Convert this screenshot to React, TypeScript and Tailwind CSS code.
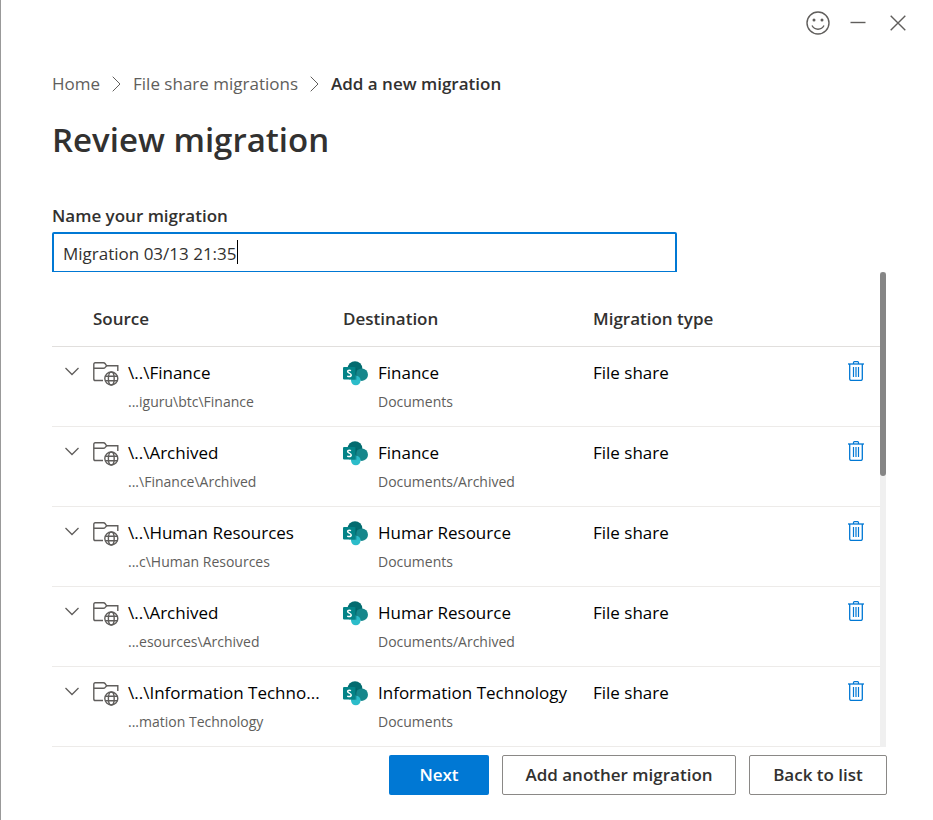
import { useState } from "react";

type Migration = {
  source: string;
  sourcePath: string;
  destination: string;
  destinationPath: string;
};

const migrations: Migration[] = [
  { source: "\\..\\Finance", sourcePath: "...iguru\\btc\\Finance", destination: "Finance", destinationPath: "Documents" },
  { source: "\\..\\Archived", sourcePath: "...\\Finance\\Archived", destination: "Finance", destinationPath: "Documents/Archived" },
  { source: "\\..\\Human Resources", sourcePath: "...c\\Human Resources", destination: "Humar Resource", destinationPath: "Documents" },
  { source: "\\..\\Archived", sourcePath: "...esources\\Archived", destination: "Humar Resource", destinationPath: "Documents/Archived" },
  { source: "\\..\\Information Techno...", sourcePath: "...mation Technology", destination: "Information Technology", destinationPath: "Documents" },
];

function SmileIcon() {
  return (
    <svg width="24" height="24" viewBox="0 0 24 24" fill="none" stroke="#605e5c" strokeWidth="1.4" aria-hidden="true">
      <circle cx="12" cy="12" r="11" />
      <path d="M6 14.5c1.2 2.3 3.3 3.7 6 3.7s4.8-1.4 6-3.7" />
      <circle cx="8" cy="9" r="1.5" fill="#605e5c" stroke="none" />
      <circle cx="16" cy="9" r="1.5" fill="#605e5c" stroke="none" />
    </svg>
  );
}

function MinimizeIcon() {
  return (
    <svg width="16" height="16" viewBox="0 0 16 16" aria-hidden="true">
      <path d="M0.5 7.5h15" stroke="#605e5c" strokeWidth="1.4" />
    </svg>
  );
}

function CloseIcon() {
  return (
    <svg width="16" height="16" viewBox="0 0 16 16" aria-hidden="true">
      <path d="M0.7 0.7l14.6 14.6M15.3 0.7L0.7 15.3" stroke="#605e5c" strokeWidth="1.4" />
    </svg>
  );
}

function ChevronRight() {
  return (
    <svg width="9" height="16" viewBox="0 0 9 16" fill="none" aria-hidden="true">
      <path d="M0.7 0.7L8 8L0.7 15.3" stroke="#605e5c" strokeWidth="1" />
    </svg>
  );
}

function ChevronDown() {
  return (
    <svg width="14" height="9" viewBox="0 0 14 9" fill="none" aria-hidden="true">
      <path d="M0.5 1L7 7.5L13.5 1" stroke="#605e5c" strokeWidth="1.3" />
    </svg>
  );
}

function NetworkFolderIcon() {
  return (
    <svg width="26" height="25" viewBox="0 -1 26 25" fill="none" stroke="#605e5c" strokeWidth="1.4" aria-hidden="true">
      <path d="M10 18.5H2.2Q0.8 18.5 0.8 17.1V2.2Q0.8 0.8 2.2 0.8H10.5Q11.5 0.8 12 1.5L13.7 3.8H24.8V9" />
      <path d="M0.8 6.3H10.5Q11.5 6.3 12 5.6L13.7 3.8" />
      <circle cx="18.3" cy="16.5" r="6.5" />
      <ellipse cx="18.3" cy="16.5" rx="2.9" ry="6.5" />
      <path d="M12.2 14.3H24.4M12.2 18.7H24.4" />
    </svg>
  );
}

function SharePointIcon() {
  return (
    <svg width="26" height="25" viewBox="0 0 26 25" aria-hidden="true">
      <circle cx="12" cy="7.5" r="7.3" fill="#036c70" />
      <circle cx="18.8" cy="13.7" r="6.2" fill="#16868b" />
      <circle cx="12.8" cy="19.5" r="4.8" fill="#2cbcc9" />
      <path d="M6 7.3h7.5v11.500H6z" fill="#02494c" opacity="0.35" />
      <rect x="0" y="6" width="12.5" height="12.5" rx="1.1" fill="#038387" />
      <path
        d="M8 9.7C7.4 9.4 6.9 9.3 6.300 9.3C5.2 9.3 4.6 9.8 4.6 10.500C4.6 12.3 8.2 11.9 8.2 14C8.2 15.1 7.4 15.600 6.1 15.600C5.4 15.600 4.8 15.4 4.2 15.1"
        fill="none"
        stroke="#fff"
        strokeWidth="1.5"
      />
    </svg>
  );
}

function TrashIcon() {
  return (
    <svg width="16" height="20" viewBox="0 0 16 20" fill="none" stroke="#0078d4" aria-hidden="true">
      <path d="M0 3H16" strokeWidth="1.3" />
      <path d="M5.5 3V1.5Q5.5 0.6 6.4 0.6H9.6Q10.5 0.6 10.5 1.5V3" strokeWidth="1.2" />
      <path d="M1.7 3V18Q1.7 19.4 3.1 19.4H12.9Q14.3 19.4 14.3 18V3" strokeWidth="1.3" />
      <path d="M5.500 6V16M8 6V16M10.500 6V16" strokeWidth="1.2" />
    </svg>
  );
}

function MigrationRow({ item }: { item: Migration }) {
  return (
    <tr className="h-20 border-b border-[#edebe9] align-top">
      <td className="pt-5 pl-[13px]">
        <button type="button" aria-label="Expand row" className="flex">
          <ChevronDown />
        </button>
      </td>
      <td className="pt-[14px]">
        <div className="flex items-start gap-[9px]">
          <NetworkFolderIcon />
          <div className="min-w-0">
            <div className="text-[17px] leading-6 whitespace-nowrap text-black">{item.source}</div>
            <div className="mt-[7px] text-sm leading-5 whitespace-nowrap text-[#605e5c]">{item.sourcePath}</div>
          </div>
        </div>
      </td>
      <td className="pt-[14px]">
        <div className="flex items-start gap-[9px]">
          <SharePointIcon />
          <div className="min-w-0">
            <div className="text-[17px] leading-6 whitespace-nowrap text-black">{item.destination}</div>
            <div className="mt-[7px] text-sm leading-5 whitespace-nowrap text-[#605e5c]">{item.destinationPath}</div>
          </div>
        </div>
      </td>
      <td className="pt-[14px] text-[17px] leading-6 text-black">File share</td>
      <td className="pt-[14px]">
        <button type="button" aria-label="Delete migration" className="flex">
          <TrashIcon />
        </button>
      </td>
    </tr>
  );
}

export default function App() {
  const [name, setName] = useState("Migration 03/13 21:35");
  return (
    <main className="flex min-h-screen flex-col border-l border-[#999999] bg-white pr-[46px] pb-6 pl-[51px] font-['Open_Sans','Noto_Sans',sans-serif] text-[#323130]">
      <header className="-mr-[19px] flex h-[46px] items-center justify-end gap-5">
        <button type="button" aria-label="Feedback" className="flex">
          <SmileIcon />
        </button>
        <div className="flex gap-6">
          <button type="button" aria-label="Minimize" className="flex">
            <MinimizeIcon />
          </button>
          <button type="button" aria-label="Close" className="flex">
            <CloseIcon />
          </button>
        </div>
      </header>

      <nav aria-label="Breadcrumb" className="mt-[26px]">
        <ol className="flex items-center gap-3 text-[17px] leading-6 text-[#605e5c]">
          <li><a href="#home">Home</a></li>
          <li aria-hidden="true"><ChevronRight /></li>
          <li><a href="#migrations">File share migrations</a></li>
          <li aria-hidden="true"><ChevronRight /></li>
          <li aria-current="page" className="font-semibold text-[#323130]">Add a new migration</li>
        </ol>
      </nav>

      <h1 className="mt-5 text-[33px] leading-12 font-semibold">Review migration</h1>

      <label htmlFor="migration-name" className="mt-10 text-[17px] leading-6 font-semibold">
        Name your migration
      </label>
      <div className="relative mt-1 max-w-[625px]">
        <input
          id="migration-name"
          value={name}
          onChange={(e) => setName(e.target.value)}
          className="block h-10 w-full rounded-t-xs border-2 border-b border-[#0078d4] px-[9px] pt-0.5 text-[17px] text-[#323130] outline-none"
        />
        <span className="absolute top-2 left-[185px] h-6 w-px bg-black" />
      </div>

      <section aria-label="Migrations" className="flex pr-px">
        <table className="w-full table-fixed border-collapse text-left">
          <colgroup>
            <col className="w-[41px]" />
            <col className="w-[250px]" />
            <col className="w-[250px]" />
            <col />
            <col className="w-8" />
          </colgroup>
          <thead>
            <tr className="h-[74px] border-b border-[#e1dfdd] text-[17px] leading-6">
              <th />
              <th className="pt-5 font-semibold">Source</th>
              <th className="pt-5 font-semibold">Destination</th>
              <th className="pt-5 font-semibold">Migration type</th>
              <th />
            </tr>
          </thead>
          <tbody>
            {migrations.map((item, index) => (
              <MigrationRow key={index} item={item} />
            ))}
          </tbody>
        </table>
        <div className="w-[6px] shrink-0 bg-[#f0f0f0]">
          <div className="h-[43%] rounded-full bg-[#868686]" />
        </div>
      </section>

      <footer className="mt-2 flex justify-end gap-[13px] text-[17px] leading-6 font-semibold">
        <button type="button" className="h-10 w-[100px] rounded-xs bg-[#0078d4] text-white">Next</button>
        <button type="button" className="h-10 w-[234px] rounded-xs border border-[#8a8886]">Add another migration</button>
        <button type="button" className="h-10 w-[138px] rounded-xs border border-[#8a8886]">Back to list</button>
      </footer>
    </main>
  );
}
